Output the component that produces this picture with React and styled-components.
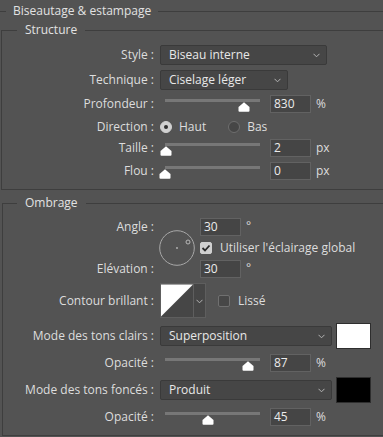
import React from "react";
import styled, { createGlobalStyle } from "styled-components";

const GlobalStyle = createGlobalStyle`
  html, body { margin: 0; padding: 0; background: #535353; }
  body {
    width: 383px; height: 437px; overflow: hidden;
    font-family: "Open Sans", "Noto Sans", sans-serif;
    font-size: 12px; color: #dddddd;
  }
  * { box-sizing: border-box; }
`;

const Outer = styled.fieldset`
  margin: 3px 0 0 0;
  padding: 0;
  border: 1px solid #3e3e3e;
  border-left: none;
  border-right: none;
  border-bottom: none;
  min-width: 0;
`;

const Legend = styled.legend`
  margin-left: ${(p) => p.$ml}px;
  padding: 0 ${(p) => p.$pad}px;
  line-height: 16px;
  height: 16px;
  color: #e2e2e2;
`;

const Section = styled.fieldset`
  margin: ${(p) => p.$mt}px 0 0 ${(p) => p.$ml}px;
  padding: 7px 0 9px 0;
  border: 1px solid #3e3e3e;
  border-right: none;
  min-width: 0;
`;

const Row = styled.div`
  display: grid;
  grid-template-columns: ${(p) => p.$label}px auto;
  column-gap: 6px;
  align-items: center;
  height: ${(p) => p.$h}px;
  margin-top: ${(p) => p.$mt || 0}px;
`;

const Label = styled.div`
  text-align: right;
  white-space: nowrap;
  line-height: 16px;
  align-self: center;
`;

const Controls = styled.div`
  display: flex;
  align-items: center;
  height: 100%;
`;

const Select = styled.div`
  width: ${(p) => p.$w}px;
  height: 20px;
  background: #464646;
  border: 1px solid #3a3a3a;
  border-radius: 2px;
  display: flex;
  align-items: center;
  justify-content: space-between;
  padding: 0 6px 0 8px;
  color: #e8e8e8;
  line-height: 16px;
`;

const Chevron = () => (
  <svg width="7" height="5" viewBox="0 0 7 5">
    <path d="M0.5 0.8 L3.5 3.8 L6.5 0.8" fill="none" stroke="#b4b4b4" strokeWidth="1" />
  </svg>
);

const SliderBox = styled.div`
  position: relative;
  width: 110px;
  height: 18px;
  align-self: flex-start;
`;

const Track = styled.div`
  margin: 4px 0 0 5px;
  width: 95px;
  height: 3px;
  background: #777777;
`;

const Thumb = styled.svg`
  position: absolute;
  top: 7px;
`;

const Slider = ({ v }) => (
  <SliderBox>
    <Track />
    <Thumb width="12" height="10" viewBox="0 0 12 10" style={{ left: 5 + 95 * v - 6 }}>
      <path d="M6 0.3 L11.5 5 L11.5 8.7 Q11.5 9.7 10.5 9.7 L1.5 9.7 Q0.5 9.7 0.5 8.7 L0.5 5 Z" fill="#ffffff" />
    </Thumb>
  </SliderBox>
);

const Input = styled.div`
  width: 41px;
  height: 18px;
  background: #454545;
  border: 1px solid #626262;
  padding-left: 3px;
  line-height: 16px;
  color: #ececec;
`;

const Unit = styled.span`
  margin-left: 5px;
  line-height: 16px;
  align-self: ${(p) => (p.$top ? "flex-start" : "center")};
`;

const Radio = styled.span`
  width: 12px;
  height: 12px;
  border-radius: 50%;
  border: 1px solid ${(p) => (p.$on ? "#d0d0d0" : "#6e6e6e")};
  background: ${(p) => (p.$on ? "#d0d0d0" : "#464646")};
  display: inline-flex;
  align-items: center;
  justify-content: center;
  margin-right: 7px;
  &::after {
    content: "";
    width: 4px;
    height: 4px;
    border-radius: 50%;
    background: ${(p) => (p.$on ? "#2e2e2e" : "transparent")};
  }
`;

const Choice = styled.label`
  display: inline-flex;
  align-items: center;
  margin-left: ${(p) => p.$ml || 0}px;
  margin-right: ${(p) => p.$mr || 0}px;
  line-height: 16px;
`;

const Box = styled.span`
  width: 12px;
  height: 12px;
  border-radius: 2px;
  border: 1px solid ${(p) => (p.$on ? "#d0d0d0" : "#707070")};
  background: ${(p) => (p.$on ? "#d0d0d0" : "#474747")};
  display: inline-flex;
  align-items: center;
  justify-content: center;
  margin-right: 8px;
`;

const Check = () => (
  <svg width="10" height="10" viewBox="0 0 10 10">
    <path d="M1.5 5 L4 7.5 L8.5 2.5" fill="none" stroke="#2a2a2a" strokeWidth="1.8" />
  </svg>
);

const AngleGrid = styled.div`
  display: grid;
  grid-template-columns: 151px 36px auto;
  grid-template-rows: 18px 18px 18px;
  column-gap: 5px;
  row-gap: 3px;
  align-items: center;
`;

const Dial = styled.svg`
  grid-column: 2;
  grid-row: 1 / 4;
  align-self: center;
`;

const Cell = styled.div`
  grid-column: ${(p) => p.$c};
  grid-row: ${(p) => p.$r};
  display: flex;
  align-items: center;
  justify-content: ${(p) => (p.$end ? "flex-end" : "flex-start")};
  height: 100%;
`;

const ContourWrap = styled.div`
  display: flex;
  height: 35px;
  border: 1px solid #5e5e5e;
  background: #464646;
`;

const ContourGraph = styled.svg`
  display: block;
  border-right: 1px solid #5e5e5e;
`;

const ContourDrop = styled.div`
  width: 11px;
  display: flex;
  align-items: flex-end;
  justify-content: center;
  padding-bottom: 13px;
`;

const Swatch = styled.div`
  width: 35px;
  height: 26px;
  background: ${(p) => p.$c};
  border: 1px solid #2e2e2e;
  margin-left: 4px;
`;

export default function App() {
  return (
    <>
      <GlobalStyle />
      <Outer>
        <Legend $ml={6} $pad={7}>Biseautage &amp; estampage</Legend>
        <Section $mt={3} $ml={1}>
          <Legend $ml={15} $pad={8}>Structure</Legend>
          <Row $label={152} $h={20}>
            <Label>Style :</Label>
            <Controls>
              <Select $w={167}>Biseau interne<Chevron /></Select>
            </Controls>
          </Row>
          <Row $label={152} $h={20} $mt={5}>
            <Label>Technique :</Label>
            <Controls>
              <Select $w={128}>Ciselage léger<Chevron /></Select>
            </Controls>
          </Row>
          <Row $label={152} $h={18} $mt={5}>
            <Label>Profondeur :</Label>
            <Controls>
              <Slider v={0.83} />
              <Input>830</Input>
              <Unit>%</Unit>
            </Controls>
          </Row>
          <Row $label={152} $h={18} $mt={5}>
            <Label>Direction :</Label>
            <Controls>
              <Choice $mr={22}><Radio $on />Haut</Choice>
              <Choice><Radio />Bas</Choice>
            </Controls>
          </Row>
          <Row $label={152} $h={18} $mt={3}>
            <Label>Taille :</Label>
            <Controls>
              <Slider v={0.012} />
              <Input>2</Input>
              <Unit>px</Unit>
            </Controls>
          </Row>
          <Row $label={152} $h={18} $mt={5}>
            <Label>Flou :</Label>
            <Controls>
              <Slider v={0} />
              <Input>0</Input>
              <Unit>px</Unit>
            </Controls>
          </Row>
        </Section>
        <Section $mt={5} $ml={2}>
          <Legend $ml={14} $pad={8}>Ombrage</Legend>
          <AngleGrid>
            <Cell $c={1} $r={1} $end><Label>Angle :</Label></Cell>
            <Dial width="36" height="36" viewBox="0 0 36 36">
              <circle cx="18" cy="18" r="17.3" fill="none" stroke="#a8a8a8" strokeWidth="1" />
              <circle cx="18" cy="18" r="0.9" fill="#b8b8b8" />
              <circle cx="29" cy="12" r="2" fill="none" stroke="#b8b8b8" strokeWidth="1" />
            </Dial>
            <Cell $c={3} $r={1}><Input>30</Input><Unit $top>°</Unit></Cell>
            <Cell $c={3} $r={2}><Choice><Box $on><Check /></Box>Utiliser l'éclairage global</Choice></Cell>
            <Cell $c={1} $r={3} $end><Label>Elévation :</Label></Cell>
            <Cell $c={3} $r={3}><Input>30</Input><Unit $top>°</Unit></Cell>
          </AngleGrid>
          <Row $label={151} $h={35} $mt={5}>
            <Label>Contour brillant :</Label>
            <Controls>
              <ContourWrap>
                <ContourGraph width="33" height="33" viewBox="0 0 33 33">
                  <polygon points="0,0 33,0 0,33" fill="#ffffff" />
                </ContourGraph>
                <ContourDrop><Chevron /></ContourDrop>
              </ContourWrap>
              <Choice $ml={12}><Box />Lissé</Choice>
            </Controls>
          </Row>
          <Row $label={151} $h={26} $mt={5}>
            <Label>Mode des tons clairs :</Label>
            <Controls>
              <Select $w={172}>Superposition<Chevron /></Select>
              <Swatch $c="#ffffff" />
            </Controls>
          </Row>
          <Row $label={151} $h={18} $mt={5}>
            <Label>Opacité :</Label>
            <Controls>
              <Slider v={0.87} />
              <Input>87</Input>
              <Unit>%</Unit>
            </Controls>
          </Row>
          <Row $label={151} $h={26} $mt={5}>
            <Label>Mode des tons foncés :</Label>
            <Controls>
              <Select $w={172}>Produit<Chevron /></Select>
              <Swatch $c="#000000" />
            </Controls>
          </Row>
          <Row $label={151} $h={18} $mt={5}>
            <Label>Opacité :</Label>
            <Controls>
              <Slider v={0.45} />
              <Input>45</Input>
              <Unit>%</Unit>
            </Controls>
          </Row>
        </Section>
      </Outer>
    </>
  );
}
